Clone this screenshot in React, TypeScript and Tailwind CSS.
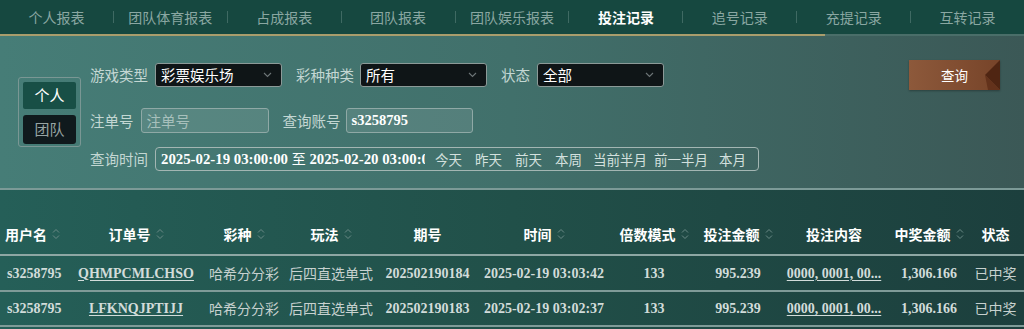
import React, { Fragment } from "react";

const CJK = '"Noto Sans CJK SC", "Noto Sans", sans-serif';
const SERIF = '"Liberation Serif", "Noto Sans CJK SC", serif';

const tabs = ["个人报表", "团队体育报表", "占成报表", "团队报表", "团队娱乐报表", "投注记录", "追号记录", "充提记录", "互转记录"];

const SortIcon = () => (
  <svg width="8" height="14" viewBox="0 0 8 14" className="ml-[5px] shrink-0">
    <path d="M1 5.5 L4 2.5 L7 5.5" fill="none" stroke="#6a8a86" strokeWidth="1" />
    <path d="M1 8.5 L4 11.5 L7 8.5" fill="none" stroke="#6a8a86" strokeWidth="1" />
  </svg>
);

const Chevron = () => (
  <svg width="9" height="6" viewBox="0 0 9 6" className="shrink-0">
    <path d="M1 1 L4.5 4.5 L8 1" fill="none" stroke="#6d7577" strokeWidth="1.1" />
  </svg>
);

const Select = ({ value }: { value: string }) => (
  <div className="w-[127px] h-[24px] bg-[#0f1517] border border-[#8c9a98] rounded-[3px] flex items-center pl-[5px] pr-[9px] text-white text-[14.5px]">
    <span className="flex-1 leading-none">{value}</span>
    <Chevron />
  </div>
);

type Col = { label: string; sort: boolean; left?: boolean };
const cols: Col[] = [
  { label: "用户名", sort: true, left: true },
  { label: "订单号", sort: true },
  { label: "彩种", sort: true },
  { label: "玩法", sort: true },
  { label: "期号", sort: false },
  { label: "时间", sort: true },
  { label: "倍数模式", sort: true },
  { label: "投注金额", sort: true },
  { label: "投注内容", sort: false },
  { label: "中奖金额", sort: true },
  { label: "状态", sort: false },
];

const rows = [
  { order: "QHMPCMLCHSO", issue: "202502190184", time: "2025-02-19 03:03:42" },
  { order: "LFKNQJPTIJJ", issue: "202502190183", time: "2025-02-19 03:02:37" },
];

const gridCls = "grid grid-cols-[70px_132px_84px_90px_103px_130px_90px_78px_114px_76px_57px]";

export default function App() {
  return (
    <div className="w-[1024px] h-[329px] overflow-hidden bg-[#1d4441]" style={{ fontFamily: CJK }}>
      {/* nav */}
      <div className="h-[34px] bg-[#164840] flex items-center">
        {tabs.map((t, i) => (
          <Fragment key={t}>
            <div
              className={
                "flex-1 text-center text-[14px] leading-none " +
                (t === "投注记录" ? "text-white font-bold" : "text-[#8aa7a2]")
              }
            >
              {t}
            </div>
            {i < tabs.length - 1 && <div className="w-px h-[12px] bg-[#3f6a63]" />}
          </Fragment>
        ))}
      </div>
      <div className="h-[2px] flex">
        <div className="w-[825px] bg-[#a99d6c]" />
        <div className="flex-1 bg-[#4a6e69]" />
      </div>

      {/* filter panel */}
      <div className="h-[152px] bg-gradient-to-r from-[#467d77] via-[#41706b] to-[#3b5856] flex">
        <div className="ml-[18px] mt-[41px] w-[63px] h-[70px] border border-[#7a9794] rounded-[3px] px-[4px] pt-[4px] flex flex-col gap-[6px]">
          <div className="h-[27px] bg-[#184f46] rounded-[2px] text-white text-[15px] flex items-center justify-center">个人</div>
          <div className="h-[29px] bg-[#101a1d] rounded-[3px] text-[#97a4a3] text-[15px] flex items-center justify-center">团队</div>
        </div>

        <div className="ml-[9px] mt-[27px] flex flex-col text-[#c3d7d3] text-[14.5px]">
          <div className="h-[24px] flex items-center">
            <span>游戏类型</span>
            <div className="ml-[7px]"><Select value="彩票娱乐场" /></div>
            <span className="ml-[14px]">彩种种类</span>
            <div className="ml-[6px]"><Select value="所有" /></div>
            <span className="ml-[14px]">状态</span>
            <div className="ml-[7px]"><Select value="全部" /></div>
          </div>
          <div className="h-[25px] mt-[21px] flex items-center">
            <span>注单号</span>
            <div className="ml-[7px] w-[128px] h-[25px] bg-white/10 border border-[#8fa9a6] rounded-[3px] flex items-center pl-[5px] text-[#a7c0bc]">注单号</div>
            <span className="ml-[14px]">查询账号</span>
            <div
              className="ml-[5px] w-[127px] h-[25px] bg-white/10 border border-[#8fa9a6] rounded-[3px] flex items-center pl-[5px] text-white font-bold text-[14.5px]"
              style={{ fontFamily: SERIF }}
            >
              s3258795
            </div>
          </div>
          <div className="h-[24px] mt-[14px] flex items-center">
            <span>查询时间</span>
            <div className="ml-[7px] w-[604px] h-[24px] border border-[#a3b6b3] rounded-[4px] flex items-center pl-[5px]">
              <div
                className="w-[264px] overflow-hidden whitespace-nowrap text-white font-bold text-[14.8px]"
                style={{ fontFamily: SERIF }}
              >
                2025-02-19 03:00:00 <span className="font-normal text-[14px]" style={{ fontFamily: CJK }}>至</span> 2025-02-20 03:00:00
              </div>
              <div className="ml-[10px] flex gap-[13px] text-[13.5px] text-[#d3e0de]">
                <span>今天</span>
                <span>昨天</span>
                <span>前天</span>
                <span>本周</span>
                <span className="-ml-[2px]">当前半月</span>
                <span className="-ml-[6px]">前一半月</span>
                <span className="-ml-[2px]">本月</span>
              </div>
            </div>
          </div>
        </div>

        <div className="ml-auto mr-[24px] mt-[24px] relative w-[91px] h-[30px] bg-gradient-to-r from-[#8d593b] to-[#774429] flex items-center justify-center text-white text-[13.5px] shadow-[0_1px_2px_rgba(0,0,0,0.3)]">
          <span className="relative z-10">查询</span>
          <svg className="absolute right-0 top-0" width="18" height="30" viewBox="0 0 18 30">
            <polygon points="18,0 18,30 3,15" fill="#4f2512" />
            <polygon points="3,15 18,30 6,30" fill="#63321b" />
          </svg>
        </div>
      </div>
      <div className="h-[2px] bg-[#7c9a97]" />

      {/* table */}
      <div className="h-[139px] pt-[24px] bg-gradient-to-r from-[#255f58] via-[#215049] to-[#1c3f3d]">
        <div className={gridCls + " h-[42px] items-center border-b-2 border-[#8ea7a4] text-white font-bold text-[14px]"}>
          {cols.map((c) => (
            <div key={c.label} className={"flex items-center " + (c.left ? "justify-start pl-[5px]" : "justify-center")}>
              <span>{c.label}</span>
              {c.sort && <SortIcon />}
            </div>
          ))}
        </div>
        {rows.map((r, i) => (
          <div
            key={r.order}
            className={gridCls + " items-center border-b-2 border-[#7f9b98] text-[14px] text-[#d2dcda] " + (i === 0 ? "h-[36px]" : "h-[35px]")}
          >
            <div className="pl-[7px] font-bold" style={{ fontFamily: SERIF }}>s3258795</div>
            <div className="text-center font-bold underline underline-offset-2" style={{ fontFamily: SERIF }}>{r.order}</div>
            <div className="text-center text-[#c7d1cf]">哈希分分彩</div>
            <div className="text-center text-[#c7d1cf]">后四直选单式</div>
            <div className="text-center font-bold" style={{ fontFamily: SERIF }}>{r.issue}</div>
            <div className="text-center font-bold" style={{ fontFamily: SERIF }}>{r.time}</div>
            <div className="text-center font-bold" style={{ fontFamily: SERIF }}>133</div>
            <div className="text-center font-bold" style={{ fontFamily: SERIF }}>995.239</div>
            <div className="text-center font-bold underline underline-offset-2" style={{ fontFamily: SERIF }}>0000, 0001, 00...</div>
            <div className="text-center font-bold" style={{ fontFamily: SERIF }}>1,306.166</div>
            <div className="text-center text-[#c7d1cf]">已中奖</div>
          </div>
        ))}
      </div>
    </div>
  );
}
